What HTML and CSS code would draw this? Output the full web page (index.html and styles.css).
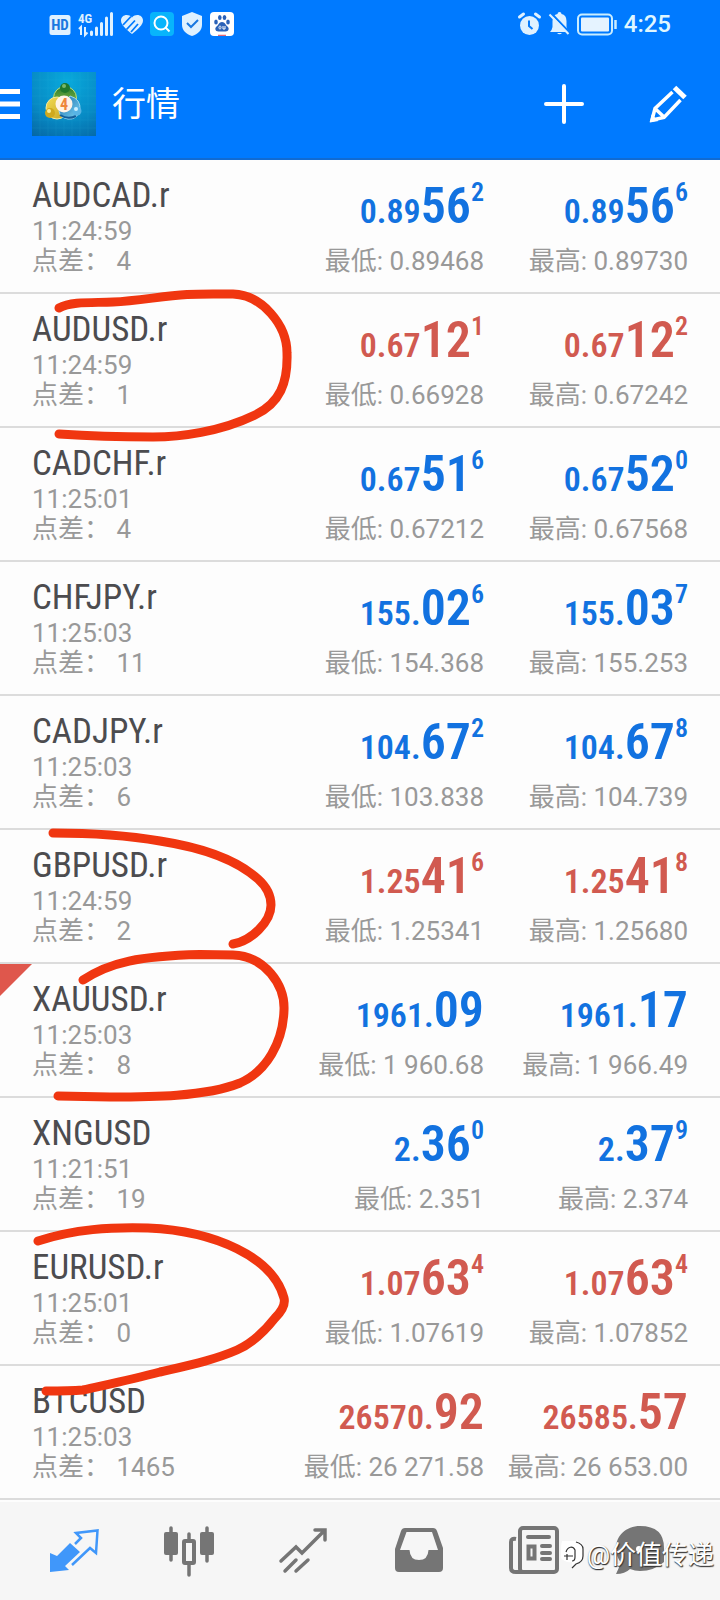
FILE: index.html
```html
<!DOCTYPE html>
<html lang="zh-CN">
<head>
<meta charset="utf-8">
<meta name="viewport" content="width=device-width, initial-scale=1">
<title>行情</title>
<link rel="stylesheet" href="styles.css">
</head>
<body>
<header class="header">
  <div class="status">
    <div class="status-group">
      <svg width="22" height="24" viewBox="0 0 22 24" aria-hidden="true"><rect x="0.5" y="3" width="21" height="20" rx="2.5" fill="#dff1ff"/><text class="icon-text" x="11" y="18" font-size="15" text-anchor="middle" fill="#1a78e0">HD</text></svg>
      <svg width="36" height="24" viewBox="0 0 36 24" aria-hidden="true"><text class="icon-text" x="0" y="11" font-size="13" fill="#dff1ff">4G</text><path d="M1 17l2-2v8M7 15v8l2.500-2.500" fill="none" stroke="#dff1ff" stroke-width="2"/><path d="M13.500 20v2.500M18.500 16v6.500M23.500 11.500v11M28.500 6v16.500M33.500 1.500v21" stroke="#dff1ff" stroke-width="3" stroke-linecap="round"/></svg>
      <svg width="22" height="24" viewBox="0 0 22 24" aria-hidden="true"><path d="M11 22C5 17 0 13 0 8.500C0 3 7 1 11 5.500C15 1 22 3 22 8.500C22 13 17 17 11 22z" fill="#dff1ff"/><path d="M2 13l8-8.500M5.500 17.500l8.500-9M10 20l7-8" stroke="#007aff" stroke-width="1.800"/></svg>
      <svg width="24" height="24" viewBox="0 0 24 24" aria-hidden="true"><rect width="24" height="24" rx="4" fill="#08b4fb"/><circle cx="11" cy="11" r="6.500" fill="none" stroke="#fff" stroke-width="2"/><path d="M15.500 15.500l4 4" stroke="#fff" stroke-width="2"/></svg>
      <svg width="22" height="24" viewBox="0 0 22 24" aria-hidden="true"><path d="M11 0l10 4v9c0 5-4 9-10 11C5 22 1 18 1 13V4z" fill="#dff1ff"/><path d="M6 11l4 4 7-7" fill="none" stroke="#1a78e0" stroke-width="2"/></svg>
      <svg width="24" height="24" viewBox="0 0 24 24" aria-hidden="true"><rect width="24" height="24" rx="4" fill="#fff"/><g fill="#2b62b8"><ellipse cx="6" cy="10" rx="1.800" ry="2.500"/><ellipse cx="9.800" cy="5.500" rx="1.800" ry="2.500"/><ellipse cx="14.500" cy="5.500" rx="1.800" ry="2.500"/><ellipse cx="18" cy="10" rx="1.800" ry="2.500"/><path d="M12 10c3 0 3.500 3 5.500 4.500s1.500 5-2 5h-7c-3.500 0-4-3.500-2-5S9 10 12 10z"/></g><path d="M9 15.500c0-2 2-2 2 0s-2 2-2 0M13 14v3h2v-3" fill="none" stroke="#fff"/><path d="M8 23.300h8" stroke="#dd3f55"/></svg>
    </div>
    <div class="status-group">
      <svg width="24" height="24" viewBox="0 0 24 24" aria-hidden="true"><circle cx="12.500" cy="13.500" r="9.500" fill="#dff1ff"/><path d="M2.500 5l4-3M22.500 5l-4-3" stroke="#dff1ff" stroke-width="3" stroke-linecap="round"/><path d="M12 8.500v5.500l3.500 3" fill="none" stroke="#087bfa" stroke-width="2"/></svg>
      <svg width="22" height="24" viewBox="0 0 22 24" aria-hidden="true"><path d="M2 20q2-2 2.500-5V9q0-6 5-7a2 2 0 0 1 4 0q5 1 5 7v6q.5 3 2.500 5zM9 21h5q-2.500 2.500-5 0z" fill="#dff1ff"/><path d="M3 1l19 20" stroke="#007aff" stroke-width="2"/><path d="M1.500 2.500l19 19.500" stroke="#dff1ff" stroke-width="2"/></svg>
      <svg width="40" height="24" viewBox="0 0 40 24" aria-hidden="true"><rect x="1" y="2.500" width="34" height="20" rx="4" fill="none" stroke="#c9edff" stroke-width="2"/><rect x="4" y="5.500" width="28" height="14" rx="1" fill="#e5f3ff"/><path d="M38.500 8v9" stroke="#c9edff" stroke-width="2.500"/></svg>
      <span class="clock">4:25</span>
    </div>
  </div>
  <div class="appbar">
    <button class="menu" aria-label="菜单"><svg width="20" height="30" viewBox="0 0 20 30"><path d="M0 2.500h20M0 15h20M0 27.500h20" stroke="#fff" stroke-width="5"/></svg></button>
    <svg class="logo" width="64" height="64" viewBox="0 0 64 64" aria-hidden="true">
      <defs>
        <radialGradient id="sky" cx=".55" cy=".15" r="1"><stop offset="0" stop-color="#08a9dc"/><stop offset=".6" stop-color="#078ac4"/><stop offset="1" stop-color="#0567a5"/></radialGradient>
        <linearGradient id="green" x2="0" y2="1"><stop stop-color="#277a2e"/><stop offset="1" stop-color="#a5cf49"/></linearGradient>
        <linearGradient id="gold" x2="1" y2="1"><stop stop-color="#f3dc55"/><stop offset="1" stop-color="#c6a321"/></linearGradient>
        <linearGradient id="aqua" x2="1" y2="1"><stop stop-color="#176bac"/><stop offset="1" stop-color="#7dd6f4"/></linearGradient>
      </defs>
      <rect width="64" height="64" fill="url(#sky)"/>
      <path d="M8 0v64M16 0v64M24 0v64M32 0v64M40 0v64M48 0v64M56 0v64M0 8h64M0 16h64M0 24h64M0 32h64M0 40h64M0 48h64M0 56h64" stroke="#3cc3e6" opacity=".1"/>
      <circle cx="33" cy="26" r="11.500" fill="url(#green)" stroke="#b9dd80"/>
      <circle cx="25" cy="36" r="11" fill="url(#gold)" stroke="#f2eaa2"/>
      <path d="M38 24q11 3 10 14-3 10-12 9-8-1-9-8z" fill="url(#aqua)" stroke="#9bd6f0"/>
      <path d="M28 43q8 5 16 1" fill="none" stroke="#145e9a" stroke-width="2"/>
      <circle cx="33" cy="16" r="5" fill="#20782b"/><circle cx="32" cy="14" r="2" fill="#79b869"/>
      <circle cx="18" cy="41" r="5" fill="#cfa91e"/><circle cx="17" cy="39" r="2" fill="#faef9a"/>
      <circle cx="45" cy="39" r="4.500" fill="#57b4e5"/><circle cx="44" cy="37" r="2" fill="#cdf0ff"/>
      <circle cx="32" cy="32" r="8.500" fill="#fff3e7"/><text class="icon-text" x="32" y="38" font-size="16" text-anchor="middle" fill="#ee873c">4</text>
    </svg>
    <h1 class="title">行情</h1>
    <button class="action" aria-label="添加"><svg width="40" height="40" viewBox="0 0 40 40"><path d="M20 2v36M2 20h36" stroke="#fff" stroke-width="4" stroke-linecap="round"/></svg></button>
    <button class="action" aria-label="编辑"><svg width="40" height="40" viewBox="0 0 40 40"><g fill="none" stroke="#fff" stroke-width="3.500"><path d="M24.500 8L7 24.500 4 36l12-2.500L32.500 16M7 24.500l9 8.500"/><path d="M26.500 3.500L37 13.500" stroke-width="5"/></g><path d="M2 38.500l1.500-8 7 6.500z" fill="#fff"/></svg></button>
  </div>
</header>

<main class="quotes">
  <ul class="list">
    <li class="quote up"><div class="info"><h2 class="symbol">AUDCAD.r</h2><p class="meta">11:24:59</p><p class="meta">点差： 4</p></div><div class="side"><p class="price">0.89<b class="big">56</b><b class="pip">2</b></p><p class="meta">最低: 0.89468</p></div><div class="side"><p class="price">0.89<b class="big">56</b><b class="pip">6</b></p><p class="meta">最高: 0.89730</p></div></li>
    <li class="quote down"><div class="info"><h2 class="symbol">AUDUSD.r</h2><p class="meta">11:24:59</p><p class="meta">点差： 1</p></div><div class="side"><p class="price">0.67<b class="big">12</b><b class="pip">1</b></p><p class="meta">最低: 0.66928</p></div><div class="side"><p class="price">0.67<b class="big">12</b><b class="pip">2</b></p><p class="meta">最高: 0.67242</p></div></li>
    <li class="quote up"><div class="info"><h2 class="symbol">CADCHF.r</h2><p class="meta">11:25:01</p><p class="meta">点差： 4</p></div><div class="side"><p class="price">0.67<b class="big">51</b><b class="pip">6</b></p><p class="meta">最低: 0.67212</p></div><div class="side"><p class="price">0.67<b class="big">52</b><b class="pip">0</b></p><p class="meta">最高: 0.67568</p></div></li>
    <li class="quote up"><div class="info"><h2 class="symbol">CHFJPY.r</h2><p class="meta">11:25:03</p><p class="meta">点差： 11</p></div><div class="side"><p class="price">155.<b class="big">02</b><b class="pip">6</b></p><p class="meta">最低: 154.368</p></div><div class="side"><p class="price">155.<b class="big">03</b><b class="pip">7</b></p><p class="meta">最高: 155.253</p></div></li>
    <li class="quote up"><div class="info"><h2 class="symbol">CADJPY.r</h2><p class="meta">11:25:03</p><p class="meta">点差： 6</p></div><div class="side"><p class="price">104.<b class="big">67</b><b class="pip">2</b></p><p class="meta">最低: 103.838</p></div><div class="side"><p class="price">104.<b class="big">67</b><b class="pip">8</b></p><p class="meta">最高: 104.739</p></div></li>
    <li class="quote down"><div class="info"><h2 class="symbol">GBPUSD.r</h2><p class="meta">11:24:59</p><p class="meta">点差： 2</p></div><div class="side"><p class="price">1.25<b class="big">41</b><b class="pip">6</b></p><p class="meta">最低: 1.25341</p></div><div class="side"><p class="price">1.25<b class="big">41</b><b class="pip">8</b></p><p class="meta">最高: 1.25680</p></div></li>
    <li class="quote up flagged"><div class="info"><h2 class="symbol">XAUUSD.r</h2><p class="meta">11:25:03</p><p class="meta">点差： 8</p></div><div class="side"><p class="price">1961.<b class="big">09</b></p><p class="meta">最低: 1 960.68</p></div><div class="side"><p class="price">1961.<b class="big">17</b></p><p class="meta">最高: 1 966.49</p></div></li>
    <li class="quote up"><div class="info"><h2 class="symbol">XNGUSD</h2><p class="meta">11:21:51</p><p class="meta">点差： 19</p></div><div class="side"><p class="price">2.<b class="big">36</b><b class="pip">0</b></p><p class="meta">最低: 2.351</p></div><div class="side"><p class="price">2.<b class="big">37</b><b class="pip">9</b></p><p class="meta">最高: 2.374</p></div></li>
    <li class="quote down"><div class="info"><h2 class="symbol">EURUSD.r</h2><p class="meta">11:25:01</p><p class="meta">点差： 0</p></div><div class="side"><p class="price">1.07<b class="big">63</b><b class="pip">4</b></p><p class="meta">最低: 1.07619</p></div><div class="side"><p class="price">1.07<b class="big">63</b><b class="pip">4</b></p><p class="meta">最高: 1.07852</p></div></li>
    <li class="quote down"><div class="info"><h2 class="symbol">BTCUSD</h2><p class="meta">11:25:03</p><p class="meta">点差： 1465</p></div><div class="side"><p class="price">26570.<b class="big">92</b></p><p class="meta">最低: 26 271.58</p></div><div class="side"><p class="price">26585.<b class="big">57</b></p><p class="meta">最高: 26 653.00</p></div></li>
  </ul>
  <svg class="marks" width="300" height="1260" viewBox="0 160 300 1260" aria-hidden="true">
    <path d="M59 308C72 301 94 303 113 302C138 301 162 296 187 294.500C203 293.500 218 294 233 294C262 295 287 325 287 353C288 383 280 403 255 415C220 432 180 437 153 437C120 437 88 436 59 434"/>
    <path d="M53 833C90 833 125 835 160 841C205 848 238 861 258 879C268 888 271 896 271 905C271 922 251 941 233 944"/>
    <path d="M83 980C110 962 140 956 200 954.500L233 955C265 956 285 985 284 1010C283 1042 267 1071 240 1083C205 1097 150 1097 110 1097L58 1096"/>
    <path d="M38 1241C75 1229 110 1227 148 1228C215 1231 273 1257 284 1298C286 1306 280 1313 275 1318C264 1332 253 1343 237 1350C214 1360 190 1365 160 1372C130 1380 105 1385 83 1390C70 1391 57 1391 46 1391"/>
  </svg>
</main>

<nav class="tabs">
  <button class="tab active" aria-label="行情"><svg width="64" height="56" viewBox="0 0 64 56"><path d="M8 25l7 3 13-13 10 9-15 14 4 4-19 2z" fill="#4097fa"/><path d="M30 37l18-17 6 5 1.500-22.500-21.500 2.500 5 5-6 6" fill="none" stroke="#4097fa" stroke-width="2.500"/></svg></button>
  <button class="tab" aria-label="图表"><svg width="64" height="56" viewBox="0 0 64 56"><g stroke="#757575" stroke-width="3.500" stroke-linecap="round"><path d="M14 0v32M32 6v41M50 0v33"/></g><g fill="#757575"><rect x="7" y="4" width="14" height="23" rx="2"/><rect x="43" y="4" width="14" height="23" rx="2"/></g><rect x="27" y="13" width="10" height="22" rx="1" fill="#f6f6f6" stroke="#757575" stroke-width="4"/></svg></button>
  <button class="tab" aria-label="交易"><svg width="64" height="56" viewBox="0 0 64 56"><g fill="none" stroke="#757575" stroke-width="3.500" stroke-linecap="round"><path d="M9 33l15-14 6 6L52 3M43 2h10v10M13 43l11-11M24 43l12-11"/></g></svg></button>
  <button class="tab" aria-label="历史"><svg width="64" height="56" viewBox="0 0 64 56"><path fill-rule="evenodd" d="M18 0h28q3 0 4 3l6 17v20q0 4-4 4H12q-4 0-4-4V21l6-18q1-3 4-3zm1.500 4L13 22h9.500q.5 10 9.500 10t9.500-10H51L45 4z" fill="#757575"/></svg></button>
  <button class="tab" aria-label="新闻"><svg width="64" height="56" viewBox="0 0 64 56"><g fill="none" stroke="#757575" stroke-width="4"><rect x="18" y="0" width="37" height="44" rx="3"/><path d="M14 11q-5-1-5 3v26q0 4 5 4h8"/><rect x="26.500" y="18.500" width="6" height="12"/></g><path d="M26 9h21M40 18h8M40 25h8M40 31h8" stroke="#757575" stroke-width="4" stroke-linecap="round"/></svg></button>
  <button class="tab" aria-label="消息"><svg width="64" height="56" viewBox="0 0 64 56"><path d="M23-2C9-2-1 8-1 20q0 8 5 15L-1 46q9 0 14-5 5 2 10 2 14 0 24-9V20Q47-2 23-2z" fill="#757575"/><circle cx="22" cy="21" r="3" fill="#fff"/></svg></button>
</nav>

<div class="watermark">
  <svg width="24" height="30" viewBox="0 0 24 30" aria-hidden="true"><path d="M2 1h14q7 0 7 7v8q0 6-7 7l-4 5v-6q-7 1-11-4V8q0-3 1-7z" fill="#fff"/><path d="M16 2q7 2 7 7v7q0 6-7 8l-4 4M4 16h9M6 12c2-6 7-6 9-2v7q0 4-3 4M7 14v6" fill="none" stroke="#333" stroke-width="1.200"/></svg>
  <span>@价值传递</span>
</div>
</body>
</html>
```
FILE: styles.css
```css
* {
  box-sizing: border-box;
}

body {
  position: relative;
  margin: 0;
  background: #fdfdfd;
  font-family: Roboto, "Noto Sans CJK SC", sans-serif;
}

h1, h2, p, ul {
  margin: 0;
  padding: 0;
  font-weight: 400;
}

button {
  display: flex;
  align-items: center;
  justify-content: center;
  margin: 0;
  padding: 0;
  border: 0;
  background: none;
}

svg {
  display: block;
  flex: none;
  overflow: visible;
}

.icon-text {
  font-family: "Roboto Condensed", "Liberation Sans Narrow", Roboto, sans-serif;
  font-weight: 700;
}

.header {
  background: #007aff;
  border-bottom: 2px solid #116bd2;
  color: #fff;
}

.status {
  display: flex;
  justify-content: space-between;
  padding: 12px 49px 0 49px;
}

.status-group {
  display: flex;
  align-items: center;
  gap: 7px;
}

.clock {
  color: #dff6ff;
  font-size: 24px;
  font-weight: 500;
  line-height: 24px;
}

.appbar {
  display: flex;
  align-items: center;
  height: 122px;
  padding: 26px 32px 12px 0;
}

.logo {
  margin-left: 12px;
}

.title {
  flex: 1;
  margin-left: 16px;
  font-size: 34px;
  line-height: 40px;
}

.action {
  margin-left: 64px;
}

.quotes {
  position: relative;
}

.list {
  list-style: none;
}

.quote {
  position: relative;
  display: grid;
  grid-template-columns: 1fr 188px 204px;
  align-items: end;
  padding: 16px 32px;
  border-bottom: 2px solid #dcdcdc;
  white-space: nowrap;
}

.flagged::before {
  content: "";
  position: absolute;
  top: 0;
  left: 0;
  width: 32px;
  height: 32px;
  background: #df574c;
  clip-path: polygon(0 0, 100% 0, 0 100%);
}

.symbol {
  color: #4c4c4f;
  font-family: "Roboto Condensed", "Liberation Sans Narrow", Roboto, sans-serif;
  font-size: 35px;
  line-height: 40px;
}

.meta {
  color: #999;
  font-size: 26px;
  line-height: 30px;
}

.side {
  text-align: right;
}

.price {
  margin-bottom: 10px;
  font-family: "Roboto Condensed", "Liberation Sans Narrow", Roboto, sans-serif;
  font-size: 34px;
  font-weight: 600;
  line-height: 36px;
}

.big {
  font-size: 50px;
  font-weight: 600;
  line-height: 60px;
}

.pip {
  font-size: 26px;
  font-weight: 600;
  line-height: 28px;
  vertical-align: 22px;
}

.up .price {
  color: #1272e0;
}

.down .price {
  color: #d15a50;
}

.marks {
  position: absolute;
  top: 0;
  left: 0;
  fill: none;
  stroke: #f03610;
  stroke-width: 9;
  stroke-linecap: round;
  pointer-events: none;
}

.tabs {
  display: grid;
  grid-template-columns: repeat(6, 1fr);
  height: 98px;
  margin-top: 2px;
  padding: 10px 14px 0 16px;
  background: #f6f6f6;
}

.watermark {
  position: absolute;
  right: 6px;
  bottom: 30px;
  display: flex;
  align-items: center;
  gap: 3px;
  color: #fff;
  font-size: 26px;
  line-height: 30px;
  text-shadow: 1px 1px 1px #333, 0 1px 1px #555;
}
```
